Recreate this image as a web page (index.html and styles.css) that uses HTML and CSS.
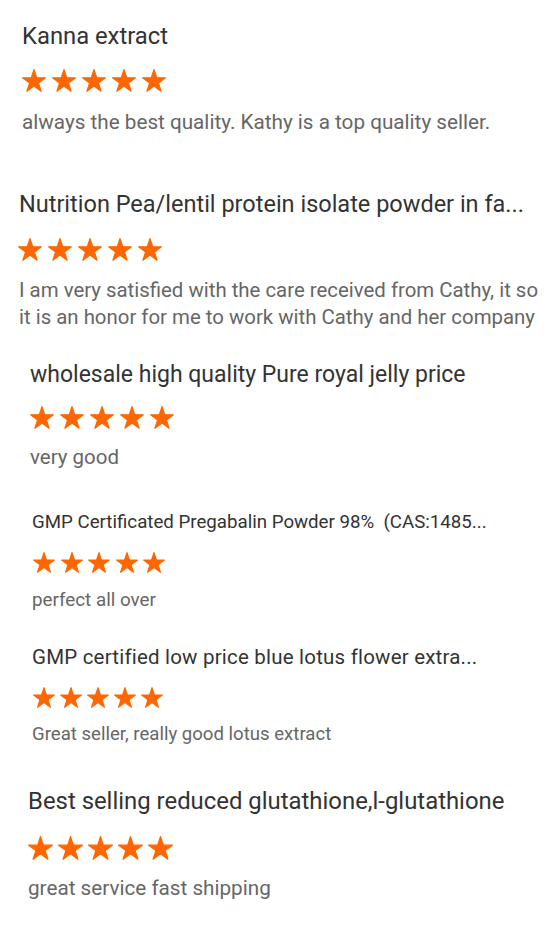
FILE: index.html
```html
<!DOCTYPE html>
<html lang="en">
  <head>
    <meta charset="UTF-8" />
    <meta name="viewport" content="width=device-width, initial-scale=1.0" />
    <title>Customer Reviews</title>
    <link rel="stylesheet" href="styles.css">
  </head>
  <body>
    <svg class="defs" aria-hidden="true">
      <symbol id="star" viewBox="0 0 24 23">
        <path d="M12 0.6L14.7 8.8L23.4 8.8L16.4 13.9L19.1 22.2L12 17.1L4.9 22.2L7.6 13.9L0.6 8.8L9.3 8.8Z" />
      </symbol>
    </svg>

    <div class="reviews">
      <div class="review review-1">
        <h3 class="review-title">Kanna extract</h3>
        <div class="stars">
          <svg class="star"><use href="#star" /></svg>
          <svg class="star"><use href="#star" /></svg>
          <svg class="star"><use href="#star" /></svg>
          <svg class="star"><use href="#star" /></svg>
          <svg class="star"><use href="#star" /></svg>
        </div>
        <p class="review-text">always the best quality. Kathy is a top quality seller.</p>
      </div>

      <div class="review review-2">
        <h3 class="review-title">Nutrition Pea/lentil protein isolate powder in fa...</h3>
        <div class="stars">
          <svg class="star"><use href="#star" /></svg>
          <svg class="star"><use href="#star" /></svg>
          <svg class="star"><use href="#star" /></svg>
          <svg class="star"><use href="#star" /></svg>
          <svg class="star"><use href="#star" /></svg>
        </div>
        <p class="review-text">I am very satisfied with the care received from Cathy, it so<br>it is an honor for me to work with Cathy and her company</p>
      </div>

      <div class="review review-3">
        <h3 class="review-title">wholesale high quality Pure royal jelly price</h3>
        <div class="stars">
          <svg class="star"><use href="#star" /></svg>
          <svg class="star"><use href="#star" /></svg>
          <svg class="star"><use href="#star" /></svg>
          <svg class="star"><use href="#star" /></svg>
          <svg class="star"><use href="#star" /></svg>
        </div>
        <p class="review-text">very good</p>
      </div>

      <div class="review review-4">
        <h3 class="review-title">GMP Certificated Pregabalin Powder 98%&nbsp; (CAS:1485...</h3>
        <div class="stars">
          <svg class="star"><use href="#star" /></svg>
          <svg class="star"><use href="#star" /></svg>
          <svg class="star"><use href="#star" /></svg>
          <svg class="star"><use href="#star" /></svg>
          <svg class="star"><use href="#star" /></svg>
        </div>
        <p class="review-text">perfect all over</p>
      </div>

      <div class="review review-5">
        <h3 class="review-title">GMP certified low price blue lotus flower extra...</h3>
        <div class="stars">
          <svg class="star"><use href="#star" /></svg>
          <svg class="star"><use href="#star" /></svg>
          <svg class="star"><use href="#star" /></svg>
          <svg class="star"><use href="#star" /></svg>
          <svg class="star"><use href="#star" /></svg>
        </div>
        <p class="review-text">Great seller, really good lotus extract</p>
      </div>

      <div class="review review-6">
        <h3 class="review-title">Best selling reduced glutathione,l-glutathione</h3>
        <div class="stars">
          <svg class="star"><use href="#star" /></svg>
          <svg class="star"><use href="#star" /></svg>
          <svg class="star"><use href="#star" /></svg>
          <svg class="star"><use href="#star" /></svg>
          <svg class="star"><use href="#star" /></svg>
        </div>
        <p class="review-text">great service fast shipping</p>
      </div>
    </div>
  </body>
</html>
```

FILE: styles.css
```css
body {
  font-family: Roboto, "Liberation Sans", Arial, sans-serif;
  margin: 0;
  padding: 0;
  background-color: #fff;
}
.defs {
  position: absolute;
  width: 0;
  height: 0;
  overflow: hidden;
}
.reviews {
  width: 540px;
  overflow: hidden;
}
.review {
  white-space: nowrap;
}
.review-title {
  margin: 0;
  font-weight: 400;
  line-height: 1.2;
  color: #333;
}
.stars {
  display: flex;
  gap: 6px;
}
.star {
  display: block;
  width: 24px;
  height: 23px;
  fill: #ff6600;
  stroke: #ff6600;
  stroke-width: 1.2;
  stroke-linejoin: round;
  overflow: visible;
}
.review-text {
  margin: 0;
  color: #666;
  line-height: 26px;
}

/* each block was captured at its own scale, so sizes differ a little */
.review-1 {
  padding: 22px 0 0 22px;
}
.review-1 .review-title {
  font-size: 23.8px;
}
.review-1 .stars {
  margin: 18.5px 0 17px;
}
.review-1 .review-text {
  font-size: 20.7px;
}

.review-2 {
  padding: 55px 0 0 19px;
}
.review-2 .review-title {
  font-size: 23.5px;
}
.review-2 .stars {
  margin: 19.5px 0 16px -1px;
}
.review-2 .review-text {
  font-size: 20.4px;
  line-height: 27px;
}

.review-3 {
  padding: 30.5px 0 0 30px;
}
.review-3 .review-title {
  font-size: 23px;
}
.review-3 .stars {
  margin: 17.5px 0 15px;
}
.review-3 .review-text {
  font-size: 20.5px;
}

.review-4 {
  padding: 40.5px 0 0 32px;
}
.review-4 .review-title {
  font-size: 18.7px;
}
.review-4 .stars {
  gap: 5.5px;
  margin: 18.5px 0 16.5px 1px;
}
.review-4 .star,
.review-5 .star {
  width: 22px;
  height: 21px;
}
.review-4 .review-text {
  font-size: 18.8px;
  line-height: 22px;
}

.review-5 {
  padding: 34px 0 0 32px;
}
.review-5 .review-title {
  font-size: 20.5px;
  letter-spacing: 0.2px;
}
.review-5 .stars {
  gap: 5px;
  margin: 17px 0 15px 1px;
}
.review-5 .review-text {
  font-size: 18.6px;
  line-height: 22px;
}

.review-6 {
  padding: 42.5px 0 0 28px;
}
.review-6 .review-title {
  font-size: 23.9px;
}
.review-6 .stars {
  gap: 5px;
  margin: 19.5px 0 15.5px;
}
.review-6 .star {
  width: 25px;
  height: 24px;
}
.review-6 .review-text {
  font-size: 20.7px;
}
```
